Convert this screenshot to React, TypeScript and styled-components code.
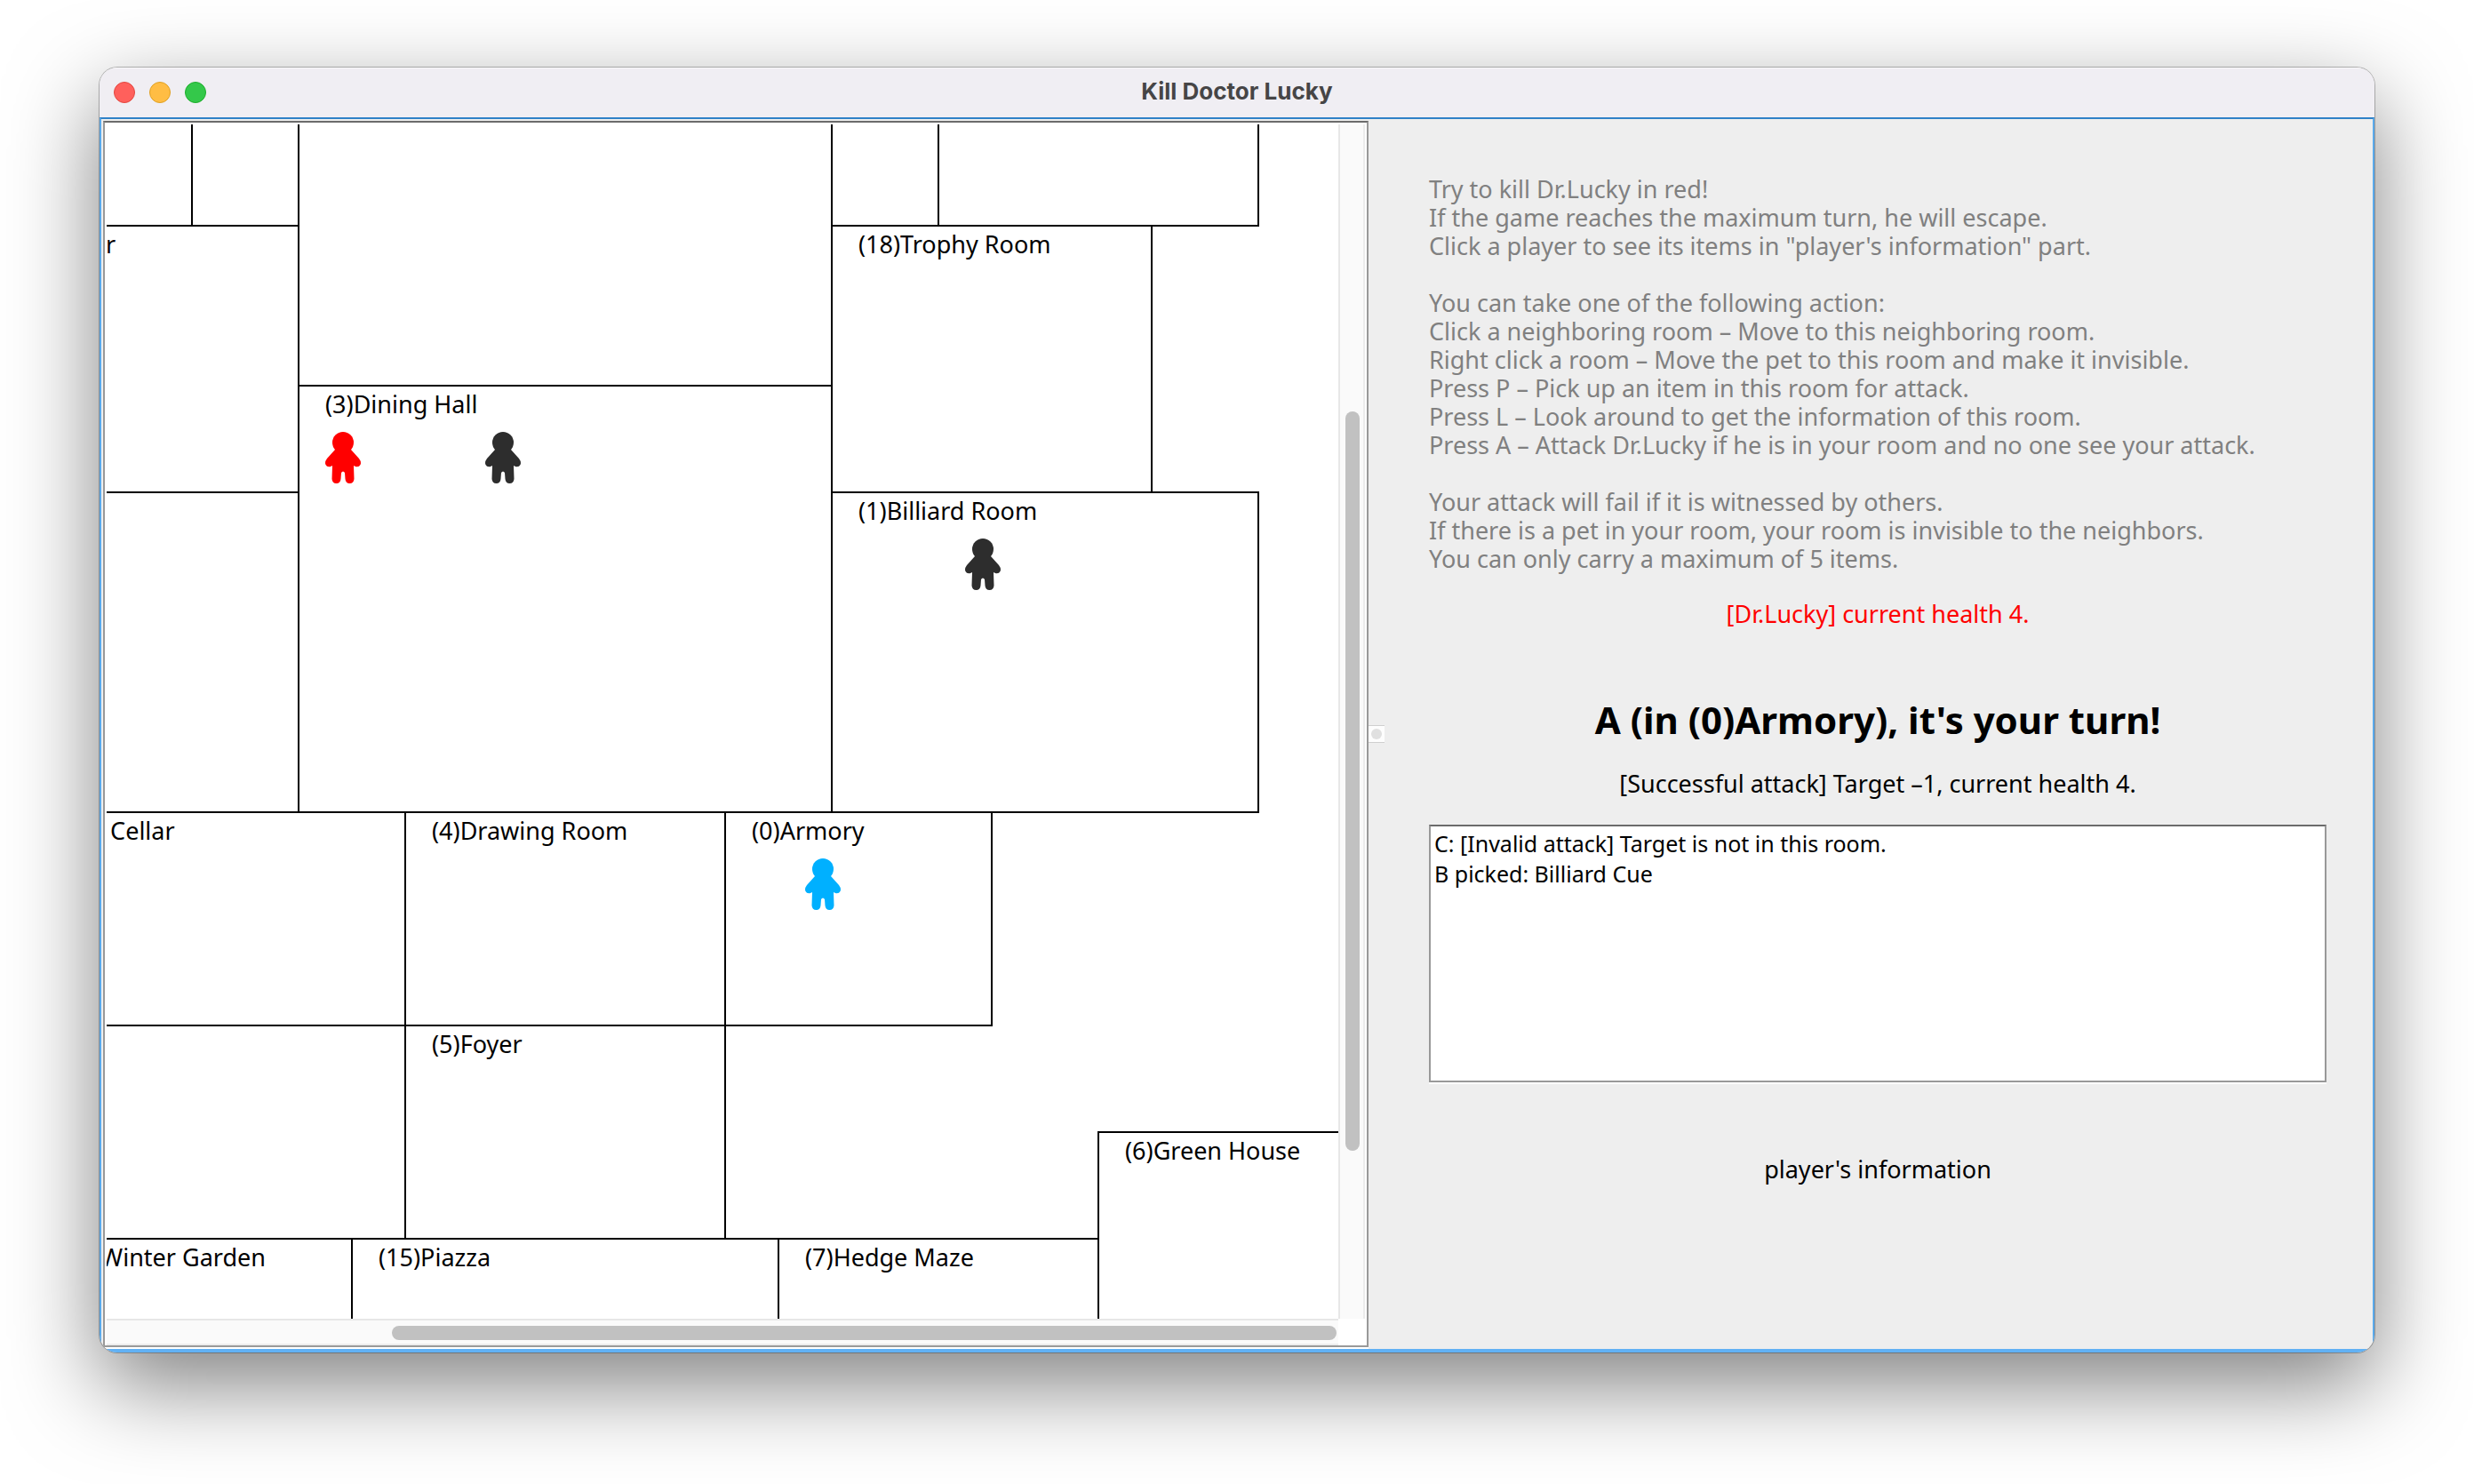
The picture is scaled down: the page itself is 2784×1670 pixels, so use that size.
import React from 'react';
import styled, { createGlobalStyle } from 'styled-components';

const Global = createGlobalStyle`
  * { box-sizing: border-box; }
  body { margin: 0; background: #fff; }
`;

const lucida = `'Noto Sans', sans-serif`;

const Desktop = styled.main`
  height: 100vh;
  display: flex;
  padding: 76px 112px 148px;
  font-family: ${lucida};
  font-size: 27px;
  line-height: 32px;
  color: #000;
`;

const Window = styled.section`
  flex: 1;
  min-width: 0;
  display: flex;
  flex-direction: column;
  border-radius: 20px;
  overflow: hidden;
  background: #eee;
  box-shadow: 0 0 0 1px rgba(0, 0, 0, 0.26), 0 36px 100px rgba(0, 0, 0, 0.5);
`;

const TitleBar = styled.header`
  height: 56px;
  display: grid;
  grid-template-columns: 1fr auto 1fr;
  align-items: center;
  padding: 0 16px;
  background: #f0eef3;
  box-shadow: inset 0 1px 0 #f9f8fa;
`;

const Lights = styled.div`
  display: flex;
  gap: 16px;
`;

const Light = styled.button<{ $fill: string; $edge: string }>`
  width: 24px;
  height: 24px;
  padding: 0;
  border: 1px solid ${(p) => p.$edge};
  border-radius: 50%;
  background: ${(p) => p.$fill};
`;

const Title = styled.h1`
  margin: 0;
  padding-bottom: 2px;
  font: 700 26px/32px Inter, sans-serif;
  color: #464546;
`;

const Content = styled.div`
  flex: 1;
  min-height: 0;
  display: grid;
  grid-template-columns: 1426fr 18px 1112fr;
  grid-template-rows: minmax(0, 1fr);
  border: 2px solid #5aa9ea;
  border-top-color: #2f81c7;
  border-bottom: 4px solid #61b1f4;
`;

const ScrollPane = styled.div`
  min-width: 0;
  min-height: 0;
  margin: 2px 0 2px 2px;
  display: grid;
  grid-template-columns: minmax(0, 1fr) 30px;
  grid-template-rows: minmax(0, 1fr) 30px;
  padding: 2px 2px 0;
  border: 2px solid #999;
  border-top-color: #6b6b6b;
  background: #fff;
  box-shadow: 0 2px 0 #fff;
`;

const Viewport = styled.div`
  overflow: hidden;
`;

const Track = styled.div<{ $vertical?: boolean }>`
  background: #fafafa;
  border-style: solid;
  border-color: #e7e7e7 #ececec #ececec #e7e7e7;
  border-width: ${(p) => (p.$vertical ? '0 2px' : '2px 0')};
  display: flex;
  flex-direction: ${(p) => (p.$vertical ? 'column' : 'row')};
  padding: ${(p) => (p.$vertical ? '2px 4px 2px 6px' : '6px 2px 4px')};
`;

const Spacer = styled.div<{ $grow: number }>`
  flex: ${(p) => p.$grow} 0 0;
`;

const Thumb = styled.div<{ $grow: number }>`
  flex: ${(p) => p.$grow} 0 0;
  border-radius: 8px;
  background: #c1c1c1;
`;

const Board = styled.div`
  display: grid;
  grid-template-columns: repeat(27, 60px);
  grid-template-rows: repeat(25, 60px);
  margin: -66px 0 0 -144px;
`;

const RoomBox = styled.section<{ $area: string }>`
  grid-area: ${(p) => p.$area};
  margin: -1px;
  border: 2px solid #000;
  padding: 4px 0 0 29px;
`;

const RoomName = styled.h2`
  margin: 0;
  font-size: 27px;
  font-weight: 400;
  line-height: 32px;
  white-space: nowrap;
`;

const Pieces = styled.div`
  display: grid;
  grid-template-columns: repeat(4, 60px);
  padding-top: 15px;
`;

const Piece = styled.svg<{ $slot: number }>`
  grid-column: ${(p) => p.$slot};
  width: 40px;
  height: 58px;
`;

const Divider = styled.div`
  display: flex;
  align-items: center;
`;

const Knob = styled.span`
  flex: 1;
  height: 20px;
  display: grid;
  place-items: center;
  background: #fdfdfd;
  border: solid #cfcfcf;
  border-width: 1px 0;
  &::after {
    content: '';
    width: 12px;
    height: 12px;
    border-radius: 50%;
    background: #e0e0e0;
  }
`;

const Side = styled.aside`
  min-width: 0;
  display: flex;
  flex-direction: column;
  align-items: center;
  padding: 63px 52px 0 50px;
`;

const Rules = styled.div`
  align-self: stretch;
  display: grid;
  gap: 32px;
  color: #808080;
`;

const Rule = styled.p`
  margin: 0;
  white-space: pre-line;
`;

const Line = styled.p<{ $top: number; $color?: string }>`
  margin: ${(p) => p.$top}px 0 0;
  color: ${(p) => p.$color ?? '#000'};
`;

const Turn = styled.h2`
  margin: 78px 0 0;
  font-size: 42px;
  line-height: 50px;
  font-weight: 700;
`;

const Log = styled.textarea`
  align-self: stretch;
  height: 290px;
  margin-top: 30px;
  padding: 2px 4px;
  border: 2px solid #999;
  border-top-color: #6b6b6b;
  border-radius: 0;
  box-shadow: 0 2px 0 #fff;
  background: #fff;
  color: #000;
  font: 25px/34px ${lucida};
  resize: none;
  outline: none;
`;

type Token = { slot: number; color: string };
type Room = { area: string; name?: string; tokens?: Token[] };

const rooms: Room[] = [
  { area: '1 / 1 / 4 / 5' },
  { area: '1 / 5 / 4 / 7' },
  { area: '1 / 7 / 7 / 17' },
  { area: '1 / 17 / 4 / 19' },
  { area: '1 / 19 / 4 / 25' },
  { area: '4 / 1 / 9 / 7', name: '(14)Parlor' },
  { area: '9 / 1 / 15 / 7' },
  { area: '4 / 17 / 9 / 23', name: '(18)Trophy Room' },
  {
    area: '7 / 7 / 15 / 17',
    name: '(3)Dining Hall',
    tokens: [
      { slot: 1, color: '#ff0000' },
      { slot: 4, color: '#2d2d2d' },
    ],
  },
  { area: '9 / 17 / 15 / 25', name: '(1)Billiard Room', tokens: [{ slot: 3, color: '#2d2d2d' }] },
  { area: '15 / 1 / 19 / 9', name: '(19)Wine Cellar' },
  { area: '15 / 9 / 19 / 15', name: '(4)Drawing Room' },
  { area: '15 / 15 / 19 / 20', name: '(0)Armory', tokens: [{ slot: 2, color: '#00b0ff' }] },
  { area: '19 / 9 / 23 / 15', name: '(5)Foyer' },
  { area: '23 / 2 / 26 / 8', name: '(20)Winter Garden' },
  { area: '23 / 8 / 26 / 16', name: '(15)Piazza' },
  { area: '23 / 16 / 26 / 22', name: '(7)Hedge Maze' },
  { area: '21 / 22 / 26 / 28', name: '(6)Green House' },
];

const rules = [
  `Try to kill Dr.Lucky in red!
If the game reaches the maximum turn, he will escape.
Click a player to see its items in "player's information" part.`,
  `You can take one of the following action:
Click a neighboring room – Move to this neighboring room.
Right click a room – Move the pet to this room and make it invisible.
Press P – Pick up an item in this room for attack.
Press L – Look around to get the information of this room.
Press A – Attack Dr.Lucky if he is in your room and no one see your attack.`,
  `Your attack will fail if it is witnessed by others.
If there is a pet in your room, your room is invisible to the neighbors.
You can only carry a maximum of 5 items.`,
];

function Figure({ slot, color }: Token) {
  return (
    <Piece $slot={slot} viewBox="0 0 40 58" fill={color} aria-hidden="true">
      <circle cx="20" cy="12" r="12" />
      <path d="M11 20 L29 20 L38 30 Q41 34 39.500 37 Q38 40 34 39 L32 38 L32.500 53 Q32 58 27.500 58 Q23 58 22.500 53 L22 46 Q20 43 18 46 L17.500 53 Q17 58 12.500 58 Q8 58 7.500 53 L8 38 L6 39 Q2 40 0.500 37 Q-1 34 2 30 Z" />
    </Piece>
  );
}

export default function App() {
  return (
    <Desktop>
      <Global />
      <Window>
        <TitleBar>
          <Lights>
            <Light $fill="#ff605c" $edge="#e2463f" aria-label="Close" />
            <Light $fill="#ffbd44" $edge="#dfa023" aria-label="Minimize" />
            <Light $fill="#34c84a" $edge="#1dad2b" aria-label="Zoom" />
          </Lights>
          <Title>Kill Doctor Lucky</Title>
        </TitleBar>
        <Content>
          <ScrollPane>
            <Viewport>
              <Board>
                {rooms.map((room) => (
                  <RoomBox key={room.area} $area={room.area}>
                    {room.name && <RoomName>{room.name}</RoomName>}
                    {room.tokens && (
                      <Pieces>
                        {room.tokens.map((t) => (
                          <Figure key={t.slot} {...t} />
                        ))}
                      </Pieces>
                    )}
                  </RoomBox>
                ))}
              </Board>
            </Viewport>
            <Track $vertical>
              <Spacer $grow={321} />
              <Thumb $grow={832} />
              <Spacer $grow={187} />
            </Track>
            <Track>
              <Spacer $grow={319} />
              <Thumb $grow={1063} />
            </Track>
          </ScrollPane>
          <Divider>
            <Knob />
          </Divider>
          <Side>
            <Rules>
              {rules.map((text) => (
                <Rule key={text}>{text}</Rule>
              ))}
            </Rules>
            <Line $top={30} $color="#ff0000">[Dr.Lucky] current health 4.</Line>
            <Turn>A (in (0)Armory), it's your turn!</Turn>
            <Line $top={31}>[Successful attack] Target –1, current health 4.</Line>
            <Log
              aria-label="Game log"
              readOnly
              value={'C: [Invalid attack] Target is not in this room.\nB picked: Billiard Cue'}
            />
            <Line $top={82}>player's information</Line>
          </Side>
        </Content>
      </Window>
    </Desktop>
  );
}
